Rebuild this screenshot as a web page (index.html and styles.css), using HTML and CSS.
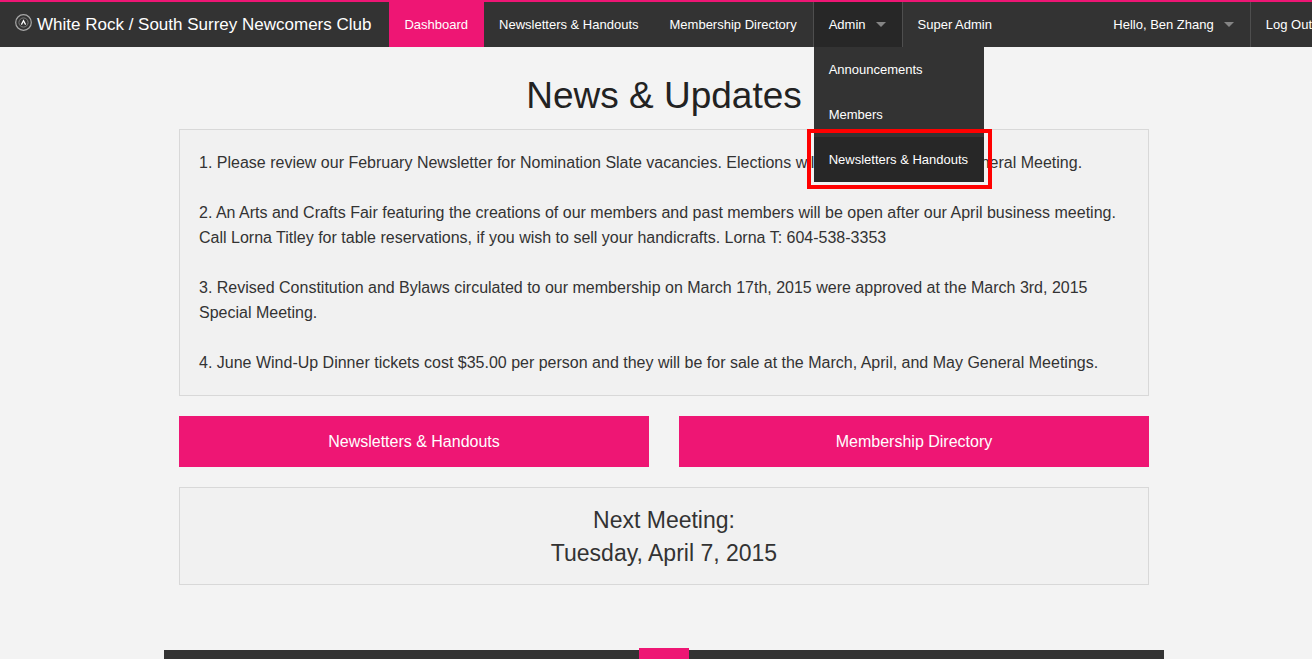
FILE: index.html
```html
<!DOCTYPE html>
<html lang="en">
<head>
<meta charset="utf-8">
<meta name="viewport" content="width=device-width, initial-scale=1">
<title>White Rock / South Surrey Newcomers Club</title>
<link rel="stylesheet" href="styles.css">
</head>
<body>
<div class="page">
  <header class="top-bar">
    <a class="brand" href="#">
      <svg class="brand-icon" viewBox="0 0 17 17" width="17" height="17" fill="none" aria-hidden="true">
        <circle cx="8.5" cy="8.5" r="7.8" stroke="#a8a8a8" stroke-width="1.2"/>
        <circle cx="8.5" cy="8.5" r="4.6" stroke="#7d7d7d" stroke-width="1"/>
        <path d="M6.4 10.6 8.5 6.6l2.1 4" stroke="#fff" stroke-width="1.2"/>
      </svg>
      <span>White Rock / South Surrey Newcomers Club</span>
    </a>
    <nav class="nav">
      <ul class="menu">
        <li><a class="link current" href="#">Dashboard</a></li>
        <li><a class="link" href="#">Newsletters &amp; Handouts</a></li>
        <li><a class="link" href="#">Membership Directory</a></li>
        <li class="open">
          <a class="link has-arrow" href="#" aria-expanded="true">Admin</a>
          <ul class="dropdown">
            <li><a class="link" href="#">Announcements</a></li>
            <li><a class="link" href="#">Members</a></li>
            <li class="marked"><a class="link active" href="#">Newsletters &amp; Handouts</a></li>
          </ul>
        </li>
        <li><a class="link" href="#">Super Admin</a></li>
      </ul>
      <ul class="menu">
        <li><a class="link has-arrow" href="#">Hello, Ben Zhang</a></li>
        <li class="divided"><a class="link" href="#">Log Out</a></li>
      </ul>
    </nav>
  </header>

  <main class="content">
    <h1 class="title">News &amp; Updates</h1>
    <section class="panel news">
      <p>1. Please review our February Newsletter for Nomination Slate vacancies. Elections will be held at the April General Meeting.</p>
      <p>2. An Arts and Crafts Fair featuring the creations of our members and past members will be open after our April business meeting. Call Lorna Titley for table reservations, if you wish to sell your handicrafts. Lorna T: 604-538-3353</p>
      <p>3. Revised Constitution and Bylaws circulated to our membership on March 17th, 2015 were approved at the March 3rd, 2015 Special Meeting.</p>
      <p>4. June Wind-Up Dinner tickets cost $35.00 per person and they will be for sale at the March, April, and May General Meetings.</p>
    </section>
    <div class="actions">
      <a class="button" href="#">Newsletters &amp; Handouts</a>
      <a class="button" href="#">Membership Directory</a>
    </div>
    <section class="panel meeting">
      <h2 class="meeting-text">Next Meeting:<br>Tuesday, April 7, 2015</h2>
    </section>
  </main>

  <footer class="footer"><span class="footer-tab"></span></footer>
</div>
</body>
</html>
```

FILE: styles.css
```css
*, *::before, *::after {
  box-sizing: border-box;
}

html {
  overflow: hidden;
}

body {
  margin: 0;
  background: #f3f3f3;
  color: #333;
  font-family: "Liberation Sans", Arial, Helvetica, sans-serif;
  font-size: 16px;
  line-height: 25px;
}

a {
  color: #fff;
  text-decoration: none;
}

ul {
  list-style: none;
  margin: 0;
  padding: 0;
}

.page {
  width: calc(100% + 16px);
}

.top-bar {
  display: flex;
  background: #333;
  border-top: 2px solid #ee1674;
  line-height: 45px;
  white-space: nowrap;
}

.brand {
  display: flex;
  gap: 5px;
  padding: 0 18px 0 15px;
  font-size: 17px;
}

.brand-icon {
  margin-top: 12px;
}

.nav {
  display: flex;
  flex: 1;
  justify-content: space-between;
  font-size: 13px;
}

.menu {
  display: flex;
}

.link {
  display: block;
  padding: 0 16px 0 15px;
}

.current {
  background: #ee1674;
}

.has-arrow {
  display: flex;
  align-items: center;
  gap: 10px;
}

.has-arrow::after {
  content: "";
  border: 5px solid transparent;
  border-top-color: #858585;
  border-bottom: 0;
}

.open {
  position: relative;
  border: solid #4e4e4e;
  border-width: 0 1px;
}

.open > .link,
.active {
  background: #272727;
}

.divided {
  border-left: 1px solid #4e4e4e;
}

.dropdown {
  position: absolute;
  top: 100%;
  left: 0;
  z-index: 1;
  background: #333;
}

.marked {
  position: relative;
}

.marked::after {
  content: "";
  position: absolute;
  inset: -8px -8px -7px -7px;
  border: 4px solid #f00;
  pointer-events: none;
}

.content {
  max-width: 1000px;
  margin: 0 auto;
  padding: 24px 15px 65px;
}

.title {
  margin: 0 0 9px;
  color: #222;
  font-size: 37px;
  font-weight: 400;
  line-height: 49px;
  text-align: center;
}

.panel {
  margin-bottom: 20px;
  border: 1px solid #d8d8d8;
  background: #f1f1f1;
}

.news {
  display: grid;
  gap: 25px;
  padding: 20px 19px;
}

.news p {
  margin: 0;
}

.actions {
  display: grid;
  grid-template-columns: 1fr 1fr;
  gap: 30px;
  margin-bottom: 20px;
}

.button {
  padding: 13px;
  background: #ee1674;
  text-align: center;
}

.meeting {
  margin-bottom: 0;
  padding: 16px 15px 14px;
}

.meeting-text {
  margin: 0;
  font-size: 23px;
  font-weight: 400;
  line-height: 33px;
  text-align: center;
}

.footer {
  display: flex;
  justify-content: center;
  max-width: 1000px;
  height: 45px;
  margin: 0 auto;
  background: #333;
}

.footer-tab {
  width: 50px;
  height: 40px;
  margin-top: -2px;
  background: #ee1674;
}
```
